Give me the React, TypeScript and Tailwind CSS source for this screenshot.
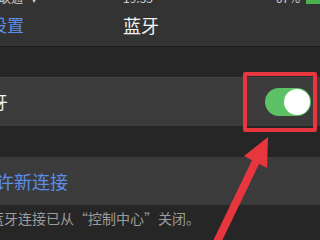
const cjk = { fontFamily: '"Noto Sans CJK SC", "Noto Sans", sans-serif' }

export default function App() {
  return (
    <div className="relative w-[320px] h-[240px] overflow-hidden bg-[#262626]" style={cjk}>
      {/* nav area */}
      <div className="bg-[#333333]">
        <div className="flex h-[4px] items-end overflow-hidden text-[12px] leading-[12px] text-[#d0d0d0]">
          <span className="-ml-[25px] w-[48px] shrink-0">中国联通</span>
          <span className="ml-[8px] shrink-0">▾</span>
          <span className="ml-[86px] shrink-0">19:55</span>
          <span className="ml-auto mr-[6px] shrink-0">67%</span>
          <span className="h-[4px] w-[14px] shrink-0 bg-[#4caf50]"></span>
        </div>
        <div className="flex h-[42px] items-center">
          <span className="-ml-[10px] text-[17px] text-[#5b8ee6]">设置</span>
          <span className="ml-[99px] text-[18px] text-[#f2f2f2]">蓝牙</span>
        </div>
      </div>
      <div className="h-px bg-[#1e1e1e]"></div>

      <div className="h-[30px]"></div>

      <div className="flex h-[49px] items-center border-t border-[#454545] bg-[#3b3b3b] pr-[9px]">
        <span className="-ml-[26px] text-[17px] text-[#f2f2f2]">蓝牙</span>
        <div className="ml-auto flex h-[28px] w-[46px] items-center justify-end rounded-full bg-[#5dc266] pr-[1px]">
          <div className="h-[26px] w-[26px] rounded-full bg-white"></div>
        </div>
      </div>

      <div className="h-[31px]"></div>

      <div className="flex h-[48px] items-center bg-[#3b3b3b]">
        <span className="-ml-[22px] text-[18px] text-[#5b8ee6]">允许新连接</span>
      </div>

      <div className="-ml-[10px] pt-[3px] text-[14px] text-[#9c9c9c]">蓝牙连接已从“控制中心”关闭。</div>

      {/* annotation */}
      <div className="absolute left-[243px] top-[72px] h-[60px] w-[74px] rounded-[2px] border-[4px] border-[#e8363f]"></div>
      <svg className="absolute left-0 top-0" width="320" height="240" viewBox="0 0 320 240">
        <line x1="216" y1="244" x2="258" y2="157" stroke="#e8363f" strokeWidth="8" />
        <polygon points="268,137 267,168 244,156" fill="#e8363f" />
      </svg>
    </div>
  )
}
